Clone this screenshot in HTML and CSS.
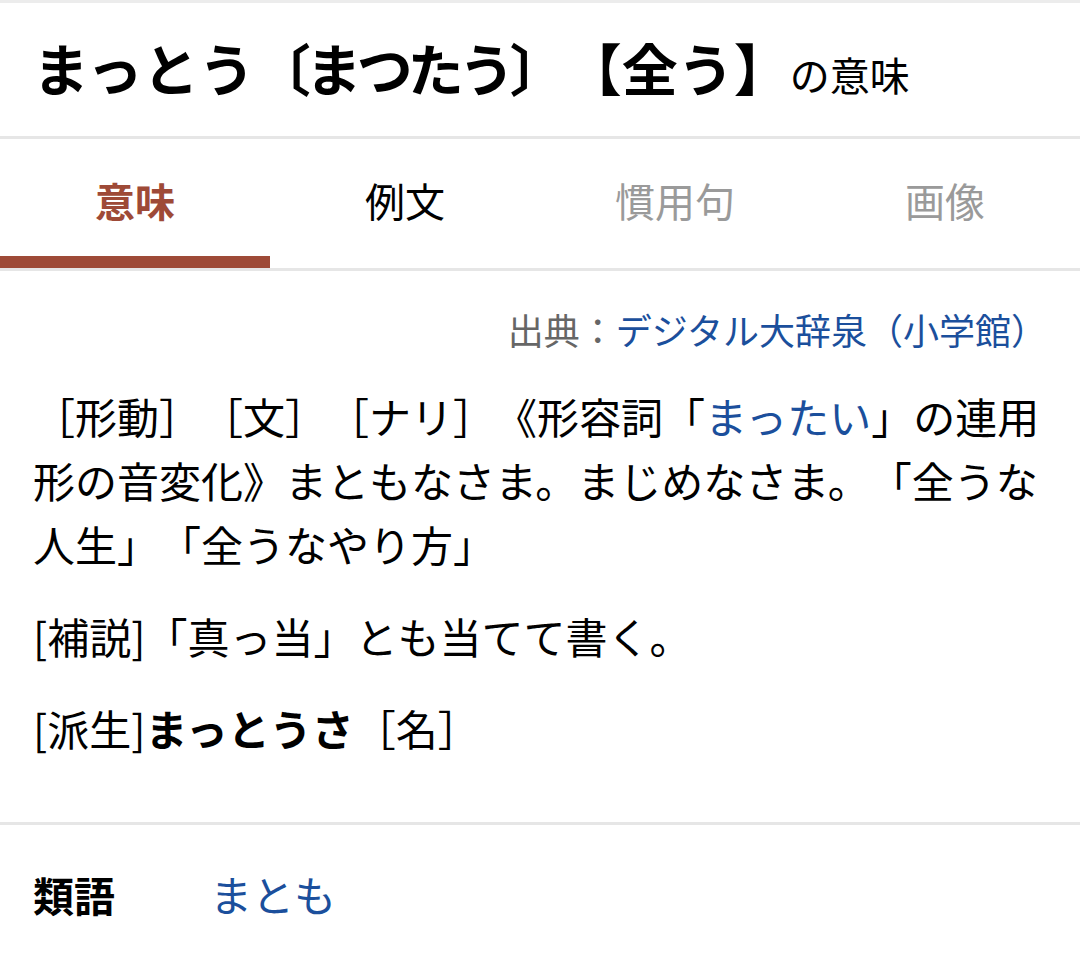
FILE: index.html
```html
<!DOCTYPE html>
<html lang="ja">
<head>
    <meta charset="UTF-8">
    <meta name="viewport" content="width=device-width, initial-scale=1.0">
    <title>まっとう【全う】の意味</title>
    <link rel="stylesheet" href="styles.css">
</head>
<body>
    <div class="entry">
        <!-- 見出し -->
        <header class="entry-head">
            <h1 class="entry-title">まっとう<span class="title-reading">〔まつたう</span>〕【全う】<span class="title-suffix">の意味</span></h1>
        </header>

        <!-- タブ -->
        <nav class="tabs">
            <a class="tab active" href="#">意味</a>
            <a class="tab" href="#">例文</a>
            <a class="tab disabled" href="#">慣用句</a>
            <a class="tab disabled" href="#">画像</a>
        </nav>

        <!-- 本文 -->
        <section class="meaning">
            <p class="source">出典：<a href="#">デジタル大辞泉（小学館）</a></p>
            <p class="text">［形動］［文］［ナリ］《形容詞「<a href="#">まったい</a>」の連用形の音変化》まともなさま。まじめなさま。「全うな人生」「全うなやり方」</p>
            <p class="text">[補説]「真っ当」とも当てて書く。</p>
            <p class="text">[派生]<b>まっとうさ</b>［名］</p>
        </section>

        <!-- 類語 -->
        <section class="synonyms">
            <h2 class="synonyms-label">類語</h2>
            <a href="#">まとも</a>
        </section>
    </div>
</body>
</html>
```

FILE: styles.css
```css
body {
    margin: 0;
    background-color: #fff;
    color: #000;
    font-family: "Noto Sans CJK JP", "Noto Sans", sans-serif;
    text-spacing-trim: space-all;
}

a {
    color: #1b4f9c; /* 青 */
    text-decoration: none;
}

.entry-head {
    border-top: 3px solid #ececec;
    border-bottom: 3px solid #e6e6e6;
    padding: 29px 33px 34px;
}

.entry-title {
    margin: 0;
    font-size: 56px;
    line-height: 70px;
    font-weight: bold;
}

.title-reading {
    letter-spacing: -5px;
}

.title-suffix {
    font-size: 40px;
    line-height: 1;
    font-weight: normal;
}

.tabs {
    display: grid;
    grid-template-columns: repeat(4, 1fr);
    border-bottom: 3px solid #e6e6e6;
}

.tab {
    display: flex;
    justify-content: center;
    align-items: center;
    height: 129px;
    padding-top: 4px;
    box-sizing: border-box;
    border-bottom: 12px solid transparent;
    color: #000;
    font-size: 40px;
}

.tab.active {
    color: #9e4a37; /* 茶 */
    font-weight: bold;
    border-bottom-color: #9e4a37;
}

.tab.disabled {
    color: #9a9a9a;
}

.meaning {
    padding: 33px 33px 62px;
}

.meaning p {
    margin: 0;
}

.source {
    text-align: right;
    font-size: 36px;
    line-height: 51px;
    color: #666;
    margin-bottom: 29px !important;
}

.text {
    font-size: 42px;
    line-height: 64px;
    margin-bottom: 28px !important;
}

.text:last-child {
    margin-bottom: 0 !important;
}

.synonyms {
    display: flex;
    align-items: center;
    border-top: 3px solid #e6e6e6;
    padding: 39px 33px 47px;
}

.synonyms-label {
    margin: 0;
    width: 177px;
    font-size: 41px;
    line-height: 60px;
}

.synonyms a {
    font-size: 42px;
    line-height: 60px;
}
```
